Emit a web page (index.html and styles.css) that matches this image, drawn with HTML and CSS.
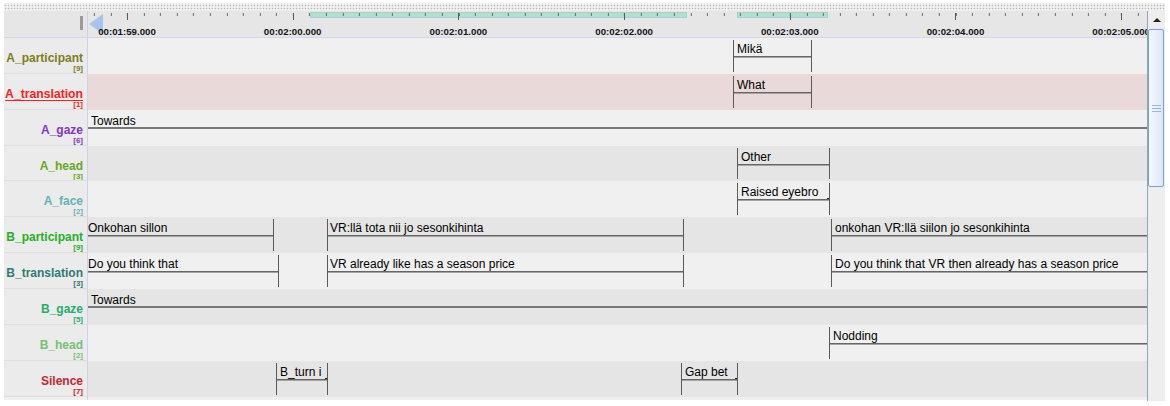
FILE: index.html
```html
<!DOCTYPE html>
<html>
<head>
<meta charset="utf-8">
<link rel="stylesheet" href="styles.css">
</head>
<body>
<div class="app">
  <div class="dots"></div>
  <div class="main">
    <div class="labels">
      <div class="lhead"><div class="grip"></div></div>
      <div class="lbl c-ap"><span class="nm">A_participant</span><span class="ct">[9]</span></div>
      <div class="lbl c-at active"><span class="nm">A_translation</span><span class="ct">[1]</span></div>
      <div class="lbl c-ag"><span class="nm">A_gaze</span><span class="ct">[6]</span></div>
      <div class="lbl c-ah"><span class="nm">A_head</span><span class="ct">[3]</span></div>
      <div class="lbl c-af"><span class="nm">A_face</span><span class="ct">[2]</span></div>
      <div class="lbl c-bp"><span class="nm">B_participant</span><span class="ct">[9]</span></div>
      <div class="lbl c-bt"><span class="nm">B_translation</span><span class="ct">[3]</span></div>
      <div class="lbl c-bg"><span class="nm">B_gaze</span><span class="ct">[5]</span></div>
      <div class="lbl c-bh"><span class="nm">B_head</span><span class="ct">[2]</span></div>
      <div class="lbl c-si"><span class="nm">Silence</span><span class="ct">[7]</span></div>
      <div class="ltail"></div>
    </div>
    <div class="tracks">
      <div class="ruler">
        <div class="band" style="left:222px;width:377px"></div>
        <div class="band" style="left:649px;width:91px"></div>
        <div class="ticks"></div>
        <div class="majors"></div>
        <svg class="cursor" width="16" height="26" viewBox="0 0 16 26"><polygon points="1,13 15,3 15,23" fill="#a9c3ef"/></svg>
        <span class="tl" style="left:39px">00:01:59.000</span>
        <span class="tl" style="left:204.7px">00:02:00.000</span>
        <span class="tl" style="left:370.4px">00:02:01.000</span>
        <span class="tl" style="left:536.1px">00:02:02.000</span>
        <span class="tl" style="left:701.8px">00:02:03.000</span>
        <span class="tl" style="left:867.5px">00:02:04.000</span>
        <span class="tl" style="left:1033.2px">00:02:05.000</span>
      </div>
      <div class="row light">
        <div class="ann" style="left:645px;width:79px"><span class="t">Mikä</span></div>
      </div>
      <div class="row pink">
        <div class="ann" style="left:645px;width:79px"><span class="t">What</span></div>
      </div>
      <div class="row light">
        <div class="ann open thick" style="left:0;width:1100px"><span class="t">Towards</span></div>
      </div>
      <div class="row dark">
        <div class="ann" style="left:649px;width:93px"><span class="t">Other</span></div>
      </div>
      <div class="row light">
        <div class="ann cut" style="left:649px;width:93px"><span class="t">Raised eyebro</span></div>
      </div>
      <div class="row dark">
        <div class="ann open" style="left:0;width:186px"><span class="t s1">Onkohan sillon</span></div>
        <div class="ann" style="left:239px;width:357px"><span class="t s2">VR:llä tota nii jo sesonkihinta</span></div>
        <div class="ann" style="left:743px;width:420px"><span class="t">onkohan VR:llä siilon jo sesonkihinta</span></div>
      </div>
      <div class="row light">
        <div class="ann open" style="left:0;width:191px"><span class="t s1">Do you think that</span></div>
        <div class="ann" style="left:239px;width:357px"><span class="t s2">VR already like has a season price</span></div>
        <div class="ann" style="left:743px;width:420px"><span class="t">Do you think that VR then already has a season price</span></div>
      </div>
      <div class="row dark">
        <div class="ann open thick" style="left:0;width:1100px"><span class="t">Towards</span></div>
      </div>
      <div class="row light">
        <div class="ann" style="left:741px;width:420px"><span class="t">Nodding</span></div>
      </div>
      <div class="row dark">
        <div class="ann cut" style="left:188px;width:52px"><span class="t">B_turn i</span></div>
        <div class="ann cut" style="left:593px;width:57px"><span class="t">Gap bet</span></div>
      </div>
      <div class="ttail"></div>
    </div>
    <div class="vscroll">
      <div class="up"><span class="arrow"></span></div>
      <div class="thumb"><span class="gl"></span><span class="gl"></span><span class="gl"></span></div>
    </div>
  </div>
</div>
</body>
</html>
```
FILE: styles.css
```css
html, body {
  margin: 0;
  padding: 0;
  background: #ffffff;
}
body {
  font-family: "Liberation Sans", Arial, sans-serif;
  width: 1170px;
  height: 406px;
  overflow: hidden;
}
.app {
  margin: 3px 5px 0 4px;
  width: 1161px;
}
.dots {
  height: 8px;
  background-color: #f1f1f1;
  background-image: radial-gradient(circle, #b6b6b6 0.8px, transparent 1.05px);
  background-size: 3px 3px;
  background-position: 0 1px;
}
.main {
  display: flex;
  align-items: flex-start;
}

/* label column */
.labels {
  width: 84px;
  flex: none;
  display: flex;
  flex-direction: column;
}
.lhead {
  height: 27px;
  background: #e6e6e6;
  border-right: 1px solid #cfd0ea;
  border-bottom: 1px solid #d4d4ee;
  box-sizing: border-box;
  position: relative;
}
.grip {
  position: absolute;
  left: 76px;
  top: 5px;
  width: 3px;
  height: 14px;
  background: #9a9a9a;
}
.lbl {
  height: 35.87px;
  box-sizing: border-box;
  background: #ebebeb;
  border-right: 1px solid #cfd0ea;
  border-bottom: 1px solid #dedede;
  padding: 13px 4px 0 0;
  text-align: right;
  overflow: hidden;
}
.nm {
  display: block;
  font-weight: bold;
  font-size: 12px;
  line-height: 14px;
  white-space: nowrap;
}
.ct {
  display: block;
  font-weight: bold;
  font-size: 8px;
  line-height: 8px;
  margin-top: 0;
}
.lbl.active .nm {
  font-size: 12.2px;
  text-decoration: underline;
  text-underline-offset: 2px;
  text-decoration-thickness: 1px;
}
.ltail {
  height: 3px;
  background: #efefef;
  border-right: 1px solid #cfd0ea;
}
.c-ap { color: #7d7d1c; }
.c-at { color: #ff1c1c; }
.c-ag { color: #8236c6; }
.c-ah { color: #67a920; }
.c-af { color: #64b3b3; }
.c-bp { color: #25b125; }
.c-bt { color: #2f7b74; }
.c-bg { color: #1fae6b; }
.c-bh { color: #78c078; }
.c-si { color: #c3282c; }

/* tracks */
.tracks {
  width: 1059px;
  flex: none;
  display: flex;
  flex-direction: column;
}
.ruler {
  position: relative;
  height: 27px;
  box-sizing: border-box;
  background: #e6e6e6;
  border-bottom: 1px solid #d4d4ee;
  overflow: hidden;
}
.band {
  position: absolute;
  top: 1px;
  height: 6px;
  background: #b2e2c4;
  border: 1px solid #a9cbe6;
  box-sizing: border-box;
}
.ticks {
  position: absolute;
  left: 0;
  right: 0;
  top: 2px;
  height: 3px;
  background-image: repeating-linear-gradient(90deg, #6a6a6a 0 1px, transparent 1px 16.57px);
  background-position: 5.86px 0;
}
.majors {
  position: absolute;
  left: 0;
  right: 0;
  top: 2px;
  height: 7px;
  background-image: repeating-linear-gradient(90deg, #5a5a5a 0 1px, transparent 1px 165.7px);
  background-position: 39px 0;
}
.cursor {
  position: absolute;
  left: 0;
  top: 0;
}
.tl {
  position: absolute;
  top: 15px;
  transform: translateX(-50%);
  font-weight: bold;
  font-size: 9.7px;
  line-height: 11px;
  color: #111111;
  white-space: nowrap;
}
.row {
  position: relative;
  height: 35.87px;
  overflow: hidden;
}
.light { background: #f0f0f0; }
.dark { background: #e5e5e5; }
.pink { background: #e9d9d9; }
.ttail {
  height: 3px;
  background: #efefef;
}
.ann {
  position: absolute;
  top: 2px;
  bottom: 2px;
  box-sizing: border-box;
  border-left: 1px solid #5a5a5a;
  border-right: 1px solid #5a5a5a;
}
.ann::after {
  content: "";
  position: absolute;
  left: 0;
  right: 0;
  top: 16px;
  height: 1px;
  background: #666666;
  box-shadow: 0 1px 0 #a4a4a4;
}
.ann.open {
  border-left: none;
}
.ann.thick::after {
  top: 15px;
  height: 2px;
  background: #777777;
  box-shadow: none;
}
.ann.cut::before {
  content: "";
  position: absolute;
  right: 0;
  top: 15px;
  width: 2px;
  height: 2px;
  background: #222;
}
.t {
  position: absolute;
  left: 3px;
  top: 2px;
  font-size: 12px;
  line-height: 14px;
  color: #000000;
  white-space: nowrap;
}
.t.s1 { left: 0; }
.t.s2 { left: 2px; }

/* vertical scrollbar */
.vscroll {
  width: 18px;
  height: 390px;
  flex: none;
  box-sizing: border-box;
  background: #eeeeee;
  border-left: 1px solid #8ea3c7;
}
.up {
  height: 17px;
  display: flex;
  align-items: center;
  justify-content: center;
}
.arrow {
  width: 0;
  height: 0;
  border-left: 4px solid transparent;
  border-right: 4px solid transparent;
  border-bottom: 4px solid #222;
}
.thumb {
  margin: 1px 1px 0 0;
  height: 158px;
  box-sizing: border-box;
  border: 1px solid #7c9fd6;
  border-radius: 2px;
  background: linear-gradient(90deg, #f6f9fe, #dbe6f8);
  display: flex;
  flex-direction: column;
  align-items: center;
  justify-content: center;
  gap: 2px;
}
.gl {
  display: block;
  width: 9px;
  height: 1px;
  background: #9fb6dc;
}
```
